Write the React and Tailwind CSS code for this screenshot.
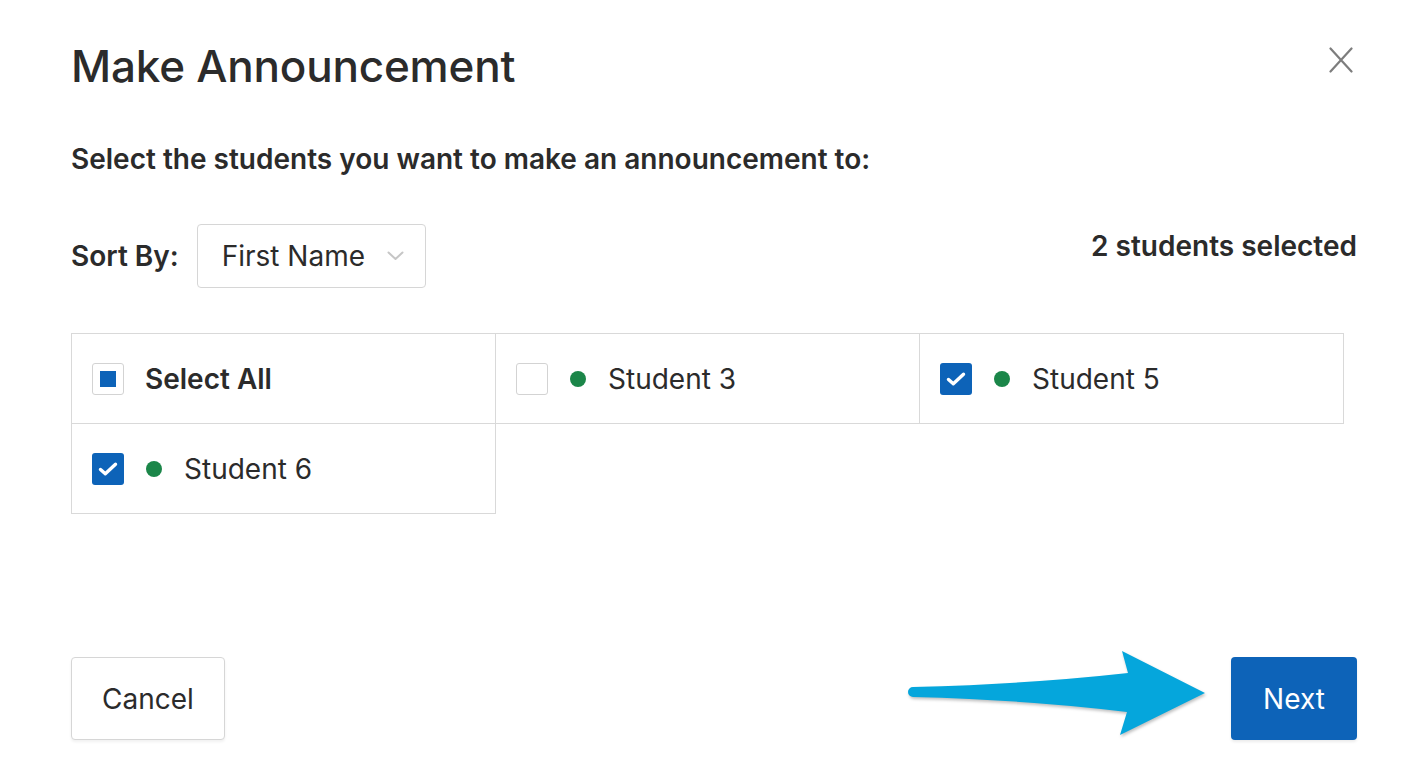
import React from "react";

function Check() {
  return (
    <div className="w-[32px] h-[32px] rounded-[3px] bg-[#0d63b8] flex items-center justify-center shrink-0">
      <svg width="20" height="16" viewBox="0 0 20 16" fill="none">
        <path d="M2.5 8.5 L7.3 12.8 L17.5 3.2" stroke="white" strokeWidth="3.4" strokeLinecap="round" strokeLinejoin="round" />
      </svg>
    </div>
  );
}

function Empty() {
  return <div className="w-[32px] h-[32px] rounded-[3px] border border-[#d3d3d3] bg-white shrink-0" />;
}

function Student({ checked, name }) {
  return (
    <div className="flex items-center h-full">
      {checked ? <Check /> : <Empty />}
      <div className="ml-[22px] w-[16px] h-[16px] rounded-full bg-[#1b8649]" />
      <span className="ml-[22px] text-[28px] text-[#2b2b2b]">{name}</span>
    </div>
  );
}

export default function App() {
  return (
    <div
      className="relative w-[1422px] h-[776px] bg-white pl-[71px] pr-[65px] text-[#2b2b2b]"
      style={{ fontFamily: "Inter, 'Noto Sans', sans-serif" }}
    >
      <div className="flex justify-between items-start pt-[40px]">
        <h1 className="text-[44px] leading-[52px] font-medium tracking-[-0.2px] text-[#2b2b2b]">Make Announcement</h1>
        <svg className="mt-[7px] mr-[4px]" width="24" height="26" viewBox="0 0 24 26" fill="none">
          <path d="M1.5 1.5 L22.5 24.5 M22.5 1.5 L1.5 24.5" stroke="#7d7d7d" strokeWidth="2.2" strokeLinecap="round" />
        </svg>
      </div>

      <p className="mt-[49px] text-[28px] leading-[36px] font-semibold">
        Select the students you want to make an announcement to:
      </p>

      <div className="mt-[47px] flex justify-between items-start">
        <div className="flex items-center">
          <span className="text-[28px] font-semibold">Sort By:</span>
          <div className="ml-[18px] w-[229px] h-[64px] border border-[#d6d6d6] rounded-[4px] flex items-center justify-between pl-[24px] pr-[21px]">
            <span className="text-[28px]">First Name</span>
            <svg width="17" height="10" viewBox="0 0 17 10" fill="none">
              <path d="M1.5 1.5 L8.5 8 L15.5 1.5" stroke="#c6c6c6" strokeWidth="2" strokeLinecap="round" strokeLinejoin="round" />
            </svg>
          </div>
        </div>
        <span className="mt-[1px] text-[28px] font-semibold">2 students selected</span>
      </div>

      <div className="mt-[45px] w-[1273px] grid grid-cols-3 border-t border-l border-[#d9d9d9]">
        <div className="h-[90px] flex items-center pl-[20px] border-r border-b border-[#d9d9d9]">
          <div className="w-[32px] h-[32px] rounded-[3px] border border-[#d3d3d3] flex items-center justify-center">
            <div className="w-[16px] h-[16px] bg-[#0d63b8]" />
          </div>
          <span className="ml-[21px] text-[28px] font-semibold">Select All</span>
        </div>
        <div className="h-[90px] flex items-center pl-[20px] border-r border-b border-[#d9d9d9]">
          <Student checked={false} name="Student 3" />
        </div>
        <div className="h-[90px] flex items-center pl-[20px] border-r border-b border-[#d9d9d9]">
          <Student checked name="Student 5" />
        </div>
        <div className="h-[90px] flex items-center pl-[20px] border-r border-b border-[#d9d9d9]">
          <Student checked name="Student 6" />
        </div>
      </div>

      <div className="mt-[143px] flex justify-between">
        <button className="w-[154px] h-[83px] border border-[#d6d6d6] rounded-[4px] bg-white text-[28px] shadow-[0_2px_3px_rgba(0,0,0,0.06)]">
          Cancel
        </button>
        <button className="w-[126px] h-[83px] rounded-[4px] bg-[#0d63b8] text-white text-[28px] shadow-[0_2px_3px_rgba(0,0,0,0.08)]">
          Next
        </button>
      </div>

      <svg
        className="absolute left-[900px] top-[640px]"
        width="320"
        height="105"
        viewBox="900 640 320 105"
        style={{ filter: "drop-shadow(1px 2px 1.5px rgba(0,0,0,0.25))" }}
      >
        <path
          d="M913 687 Q1030 684 1128 673 L1122 651 L1205 693 L1120 735 L1127 712 Q1030 700 913 697 A5 5 0 0 1 913 687 Z"
          fill="#05a6dc"
        />
      </svg>
    </div>
  );
}
